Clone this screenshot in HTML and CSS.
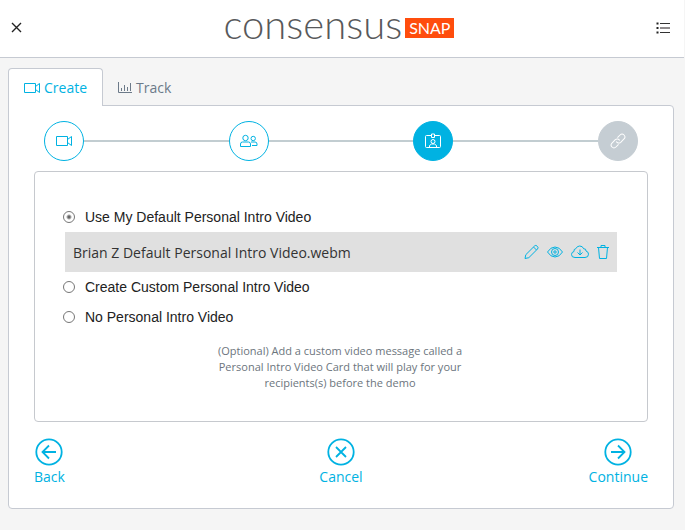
FILE: index.html
```html
<!doctype html>
<html lang="en">
<head>
<meta charset="utf-8">
<title>Consensus Snap</title>
<link rel="stylesheet" href="styles.css">
</head>
<body>
<!-- top bar -->
<header class="topbar">
	<button type="button" class="icon-btn" aria-label="Close">
		<svg width="11" height="11" viewBox="0 0 11 11"><path d="M1 1l9 9M10 1l-9 9" stroke-width="1.4"/></svg>
	</button>
	<div class="logo">
		<span class="logo-name">consensus</span>
		<span class="logo-tag">SNAP</span>
	</div>
	<button type="button" class="icon-btn" aria-label="Menu">
		<svg width="15" height="13" viewBox="0 0 15 13"><path d="M4 2.500h10M4 11.500h10" stroke="#333"/><path d="M4 7h10" stroke="#8f8b8d" stroke-width="2"/><path d="M.5 2.500h2M.5 7h2M.5 11.500h2" stroke-width="2"/></svg>
	</button>
</header>

<main class="page">
	<!-- tabs -->
	<nav class="tabs">
		<a href="#" class="tab active">
			<svg width="16" height="12" viewBox="0 0 16 12"><path d="M.5 1.500h11v9H.5zM11.500 4.500l4-3v9l-4-3"/></svg>
			Create
		</a>
		<a href="#" class="tab">
			<svg width="14" height="12" viewBox="0 0 14 12"><path d="M.5 0v10.500H14M3.500 9V6M6.500 9V3M9.500 9V5M12.500 9V1"/></svg>
			Track
		</a>
	</nav>

	<section class="panel">
		<!-- progress -->
		<div class="steps">
			<span class="step">
				<svg width="16" height="12" viewBox="0 0 16 12"><path d="M.5 1.500h11v9H.5zM11.500 4.500l4-3v9l-4-3"/></svg>
			</span>
			<span class="line"></span>
			<span class="step">
				<svg width="18" height="14" viewBox="0 0 18 14"><circle cx="5.500" cy="4" r="2.700"/><circle cx="13.200" cy="4.500" r="2.200"/><path d="M.5 12.500v-2.500q0-2 2-2h6q2 0 2 2v2.500zM11 8h4q2 0 2 2v1.500h-5"/></svg>
			</span>
			<span class="line"></span>
			<span class="step current">
				<svg width="16" height="16" viewBox="0 0 16 16"><path d="M6 2.500H1.500q-1 0-1 1v10q0 1 1 1h13q1 0 1-1v-10q0-1-1-1H10M6.500 1h3v3.500h-3zM4.500 14.500v-2l2-1.500h3l2 1.500v2"/><circle cx="8" cy="8.500" r="2"/></svg>
			</span>
			<span class="line"></span>
			<span class="step disabled">
				<svg width="16" height="16" viewBox="0 0 16 16"><g transform="rotate(-45 8 8)"><path d="M6 10.800H2.300a2.800 2.800 0 0 1 0-5.600H7a2.800 2.800 0 0 1 2.600 3.600M10 5.200h3.700a2.800 2.800 0 0 1 0 5.600H9a2.800 2.800 0 0 1-2.600-3.600"/></g></svg>
			</span>
		</div>

		<!-- video options -->
		<form class="card">
			<label class="option"><input type="radio" name="intro" checked>Use My Default Personal Intro Video</label>
			<div class="video">
				<span class="video-name">Brian Z Default Personal Intro Video.webm</span>
				<button type="button" aria-label="Edit">
					<svg width="15" height="16" viewBox="0 0 15 16"><path d="M1 14.500l.8-3.800 8.700-8.700q1.200-1.200 2.500 0l.5.5q1.200 1.200 0 2.500l-8.700 8.700zM9.500 3l3 3"/></svg>
				</button>
				<button type="button" aria-label="Preview">
					<svg width="16" height="12" viewBox="0 0 16 12"><path d="M.5 6Q3.500 1 8 1t7.500 5Q12.500 11 8 11T.5 6z"/><circle cx="8" cy="6" r="3.500"/><circle cx="8" cy="6" r="1.200"/></svg>
				</button>
				<button type="button" aria-label="Download">
					<svg width="18" height="14" viewBox="0 0 18 14"><path d="M4 12.500q-3.500 0-3.500-3 0-2.500 2.500-3Q2.500 4 4.800 3.700 6 1 8.700 1q3 0 4 2.800 2.500-.3 2.300 2.200 2.500.7 2.500 3.200 0 3.300-3.500 3.300zM9 4.500V10M6.500 7.500L9 10l2.500-2.500"/></svg>
				</button>
				<button type="button" aria-label="Delete">
					<svg width="12" height="14" viewBox="0 0 12 14"><path d="M0 2.500h12M4 2.500v-2h4v2M1.500 2.500l1 11h7l1-11"/></svg>
				</button>
			</div>
			<label class="option"><input type="radio" name="intro">Create Custom Personal Intro Video</label>
			<label class="option"><input type="radio" name="intro">No Personal Intro Video</label>
			<p class="note">(Optional) Add a custom video message called a Personal Intro Video Card that will play for your recipients(s) before the demo</p>
		</form>

		<!-- bottom buttons -->
		<div class="actions">
			<button type="button" class="action">
				<svg width="28" height="28" viewBox="0 0 28 28"><circle cx="14" cy="14" r="12.700"/><path d="M21 14H7.500M14 7.500L7.500 14l6.500 6.500"/></svg>
				Back
			</button>
			<button type="button" class="action">
				<svg width="28" height="28" viewBox="0 0 28 28"><circle cx="14" cy="14" r="12.700"/><path d="M9 9l10 10M19 9L9 19"/></svg>
				Cancel
			</button>
			<button type="button" class="action">
				<svg width="28" height="28" viewBox="0 0 28 28"><circle cx="14" cy="14" r="12.700"/><path d="M7 14h13.500M14 7.500l6.500 6.500-6.500 6.500"/></svg>
				Continue
			</button>
		</div>
	</section>
</main>
</body>
</html>
```
FILE: styles.css
```css
*{
	box-sizing:border-box;
}
body
{
	margin:0;
	background-color:#f5f5f5;
	font-family:"Open Sans",sans-serif;
	font-size:14px;
	color:#222;
}
button
{
	padding:0;
	border:0;
	background:none;
	font:inherit;
	color:inherit;
	cursor:pointer;
}
svg
{
	display:block;
	flex:none;
	fill:none;
	stroke:currentColor;
}
/* top bar */
.topbar
{
	display:flex;
	align-items:center;
	justify-content:space-between;
	height:58px;
	margin-right:1px;
	padding:0 13px 2px 11px;
	background-color:#fff;
	border-bottom:1px solid #c6cad2;
}
.logo
{
	display:flex;
	align-items:center;
	gap:3px;
}
.logo-name
{
	font-family:Lato,sans-serif;
	font-size:40px;
	font-weight:300;
	line-height:40px;
	padding-bottom:8px;
	color:#58595b;
}
.logo-tag
{
	padding:0 4px;
	background-color:#ff4d0d;
	font-family:Lato,sans-serif;
	font-size:16px;
	line-height:20px;
	color:#fff;
}
/* tabs */
.page
{
	padding:10px 11px 20px 8px;
}
.tabs
{
	display:flex;
	margin-bottom:-1px;
}
.tab
{
	display:flex;
	align-items:center;
	gap:4px;
	height:38px;
	padding:0 14px;
	border:1px solid transparent;
	border-bottom:0;
	color:#6c7a89;
	text-decoration:none;
}
.tab.active
{
	padding:0 15px;
	background-color:#fff;
	border-color:#c6cad2;
	border-radius:4px 4px 0 0;
	color:#00b2e2;
	position:relative;
}
.panel
{
	padding:15px 25px 21px;
	background-color:#fff;
	border:1px solid #c6cad2;
	border-radius:0 4px 4px 4px;
}
/* progress */
.steps
{
	display:flex;
	align-items:center;
	padding:0 10px;
}
.step
{
	display:flex;
	align-items:center;
	justify-content:center;
	width:40px;
	height:40px;
	border:1px solid #00b2e2;
	border-radius:50%;
	color:#00b2e2;
}
.step.current
{
	background-color:#00b2e2;
	color:#fff;
}
.step.disabled
{
	background-color:#c5cdd3;
	border-color:#c5cdd3;
	color:#fff;
}
.line
{
	flex:1;
	height:2px;
	background-color:#c2cdd1;
}
/* options */
.card
{
	margin-top:10px;
	padding:30px 30px 30px 28px;
	border:1px solid #c6c9ce;
	border-radius:4px;
}
.option
{
	display:flex;
	align-items:center;
	gap:10px;
	height:30px;
	font-family:"Liberation Sans",Arial,sans-serif;
	font-size:14px;
}
.option input
{
	appearance:none;
	width:12px;
	height:12px;
	margin:0;
	border:1px solid #767676;
	border-radius:50%;
	background-color:#fff;
}
.option input:checked
{
	background-image:radial-gradient(circle,#666 1px,transparent 3px);
}
.video
{
	display:flex;
	align-items:center;
	gap:8px;
	height:40px;
	margin-left:2px;
	padding:0 8px;
	background-color:#e0e0e0;
	color:#333;
}
.video-name
{
	flex:1;
}
.video button
{
	color:#00b2e2;
}
.note
{
	max-width:250px;
	margin:11px auto 0;
	font-size:11px;
	line-height:16px;
	text-align:center;
	color:#6c757d;
}
/* bottom buttons */
.actions
{
	display:grid;
	grid-template-columns:1fr 1fr 1fr;
	justify-items:center;
	margin-top:16px;
}
.action
{
	display:flex;
	flex-direction:column;
	align-items:center;
	gap:1px;
	line-height:20px;
	color:#00b2e2;
}
.action svg
{
	stroke-width:1.8;
}
.action:first-child
{
	justify-self:start;
}
.action:last-child
{
	justify-self:end;
}
```
